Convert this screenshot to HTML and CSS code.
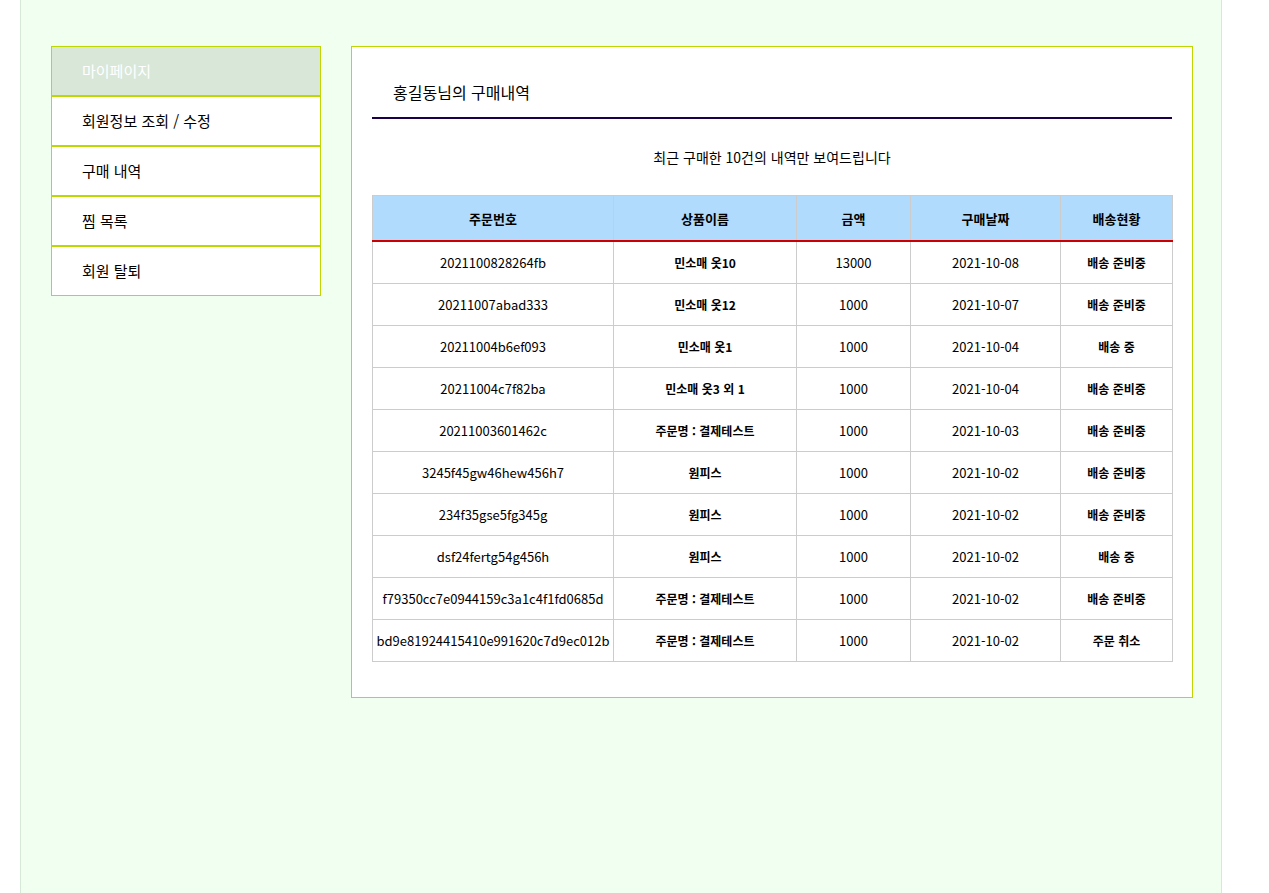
FILE: index.html
```html
<!DOCTYPE html>
<html lang="ko">
<head>
<meta charset="utf-8">
<title>마이페이지</title>
<link rel="stylesheet" href="styles.css">
</head>
<body>
<div class="wrap">
  <nav class="side">
    <a class="side-item active">마이페이지</a>
    <a class="side-item">회원정보 조회 / 수정</a>
    <a class="side-item">구매 내역</a>
    <a class="side-item">찜 목록</a>
    <a class="side-item">회원 탈퇴</a>
  </nav>
  <main class="panel">
    <h2 class="title">홍길동님의 구매내역</h2>
    <p class="sub">최근 구매한 10건의 내역만 보여드립니다</p>
    <table class="orders">
      <colgroup>
        <col class="c1"><col class="c2"><col class="c3"><col class="c4"><col class="c5">
      </colgroup>
      <thead>
        <tr><th>주문번호</th><th>상품이름</th><th>금액</th><th>구매날짜</th><th>배송현황</th></tr>
      </thead>
      <tbody>
        <tr><td>2021100828264fb</td><td class="b">민소매 옷10</td><td>13000</td><td>2021-10-08</td><td class="b">배송 준비중</td></tr>
        <tr><td>20211007abad333</td><td class="b">민소매 옷12</td><td>1000</td><td>2021-10-07</td><td class="b">배송 준비중</td></tr>
        <tr><td>20211004b6ef093</td><td class="b">민소매 옷1</td><td>1000</td><td>2021-10-04</td><td class="b">배송 중</td></tr>
        <tr><td>20211004c7f82ba</td><td class="b">민소매 옷3 외 1</td><td>1000</td><td>2021-10-04</td><td class="b">배송 준비중</td></tr>
        <tr><td>20211003601462c</td><td class="b">주문명 : 결제테스트</td><td>1000</td><td>2021-10-03</td><td class="b">배송 준비중</td></tr>
        <tr><td>3245f45gw46hew456h7</td><td class="b">원피스</td><td>1000</td><td>2021-10-02</td><td class="b">배송 준비중</td></tr>
        <tr><td>234f35gse5fg345g</td><td class="b">원피스</td><td>1000</td><td>2021-10-02</td><td class="b">배송 준비중</td></tr>
        <tr><td>dsf24fertg54g456h</td><td class="b">원피스</td><td>1000</td><td>2021-10-02</td><td class="b">배송 중</td></tr>
        <tr><td>f79350cc7e0944159c3a1c4f1fd0685d</td><td class="b">주문명 : 결제테스트</td><td>1000</td><td>2021-10-02</td><td class="b">배송 준비중</td></tr>
        <tr><td>bd9e81924415410e991620c7d9ec012b</td><td class="b">주문명 : 결제테스트</td><td>1000</td><td>2021-10-02</td><td class="b">주문 취소</td></tr>
      </tbody>
    </table>
  </main>
</div>
</body>
</html>
```
FILE: styles.css
```css
html, body {
  margin: 0;
  padding: 0;
  background: #ffffff;
  font-family: "Noto Sans CJK KR", "Noto Sans", sans-serif;
  color: #000;
}

.wrap {
  margin-left: 20px;
  width: 1202px;
  min-height: 893px;
  box-sizing: border-box;
  background: #f0fff0;
  border-left: 1px solid #d6e9d6;
  border-right: 1px solid #d6e9d6;
  padding: 46px 28px 0 30px;
  display: flex;
  align-items: flex-start;
  gap: 30px;
}

.side {
  width: 270px;
  display: flex;
  flex-direction: column;
  flex-shrink: 0;
}

.side-item {
  display: block;
  height: 48px;
  line-height: 48px;
  border: 1px solid #bcd800;
  background: #ffffff;
  padding-left: 30px;
  font-size: 15px;
  color: #000;
}

.side-item.active {
  background: #d9e7d9;
  color: #ffffff;
}

.panel {
  width: 842px;
  box-sizing: border-box;
  background: #ffffff;
  border: 1px solid #bcd800;
  padding: 20px 20px 35px 20px;
}

.title {
  margin: 0;
  height: 50px;
  line-height: 50px;
  padding-left: 21px;
  font-size: 16px;
  font-weight: normal;
  border-bottom: 2px solid #1a0048;
}

.sub {
  margin: 0;
  height: 76px;
  line-height: 76px;
  text-align: center;
  font-size: 14px;
}

.orders {
  width: 800px;
  border-collapse: collapse;
  table-layout: fixed;
  font-size: 13px;
}

.c1 { width: 241px; }
.c2 { width: 183px; }
.c3 { width: 114px; }
.c4 { width: 150px; }
.c5 { width: 112px; }

.orders th {
  background: #b0dbfc;
  height: 44px;
  padding: 0;
  border: 1px solid #cccccc;
  border-bottom: 2px solid #cc0000;
  font-weight: bold;
  font-size: 13px;
}

.orders td {
  height: 41px;
  padding: 0;
  border: 1px solid #cccccc;
  text-align: center;
  white-space: nowrap;
  overflow: hidden;
}

.orders td.b {
  font-weight: bold;
  font-size: 12px;
}
```
